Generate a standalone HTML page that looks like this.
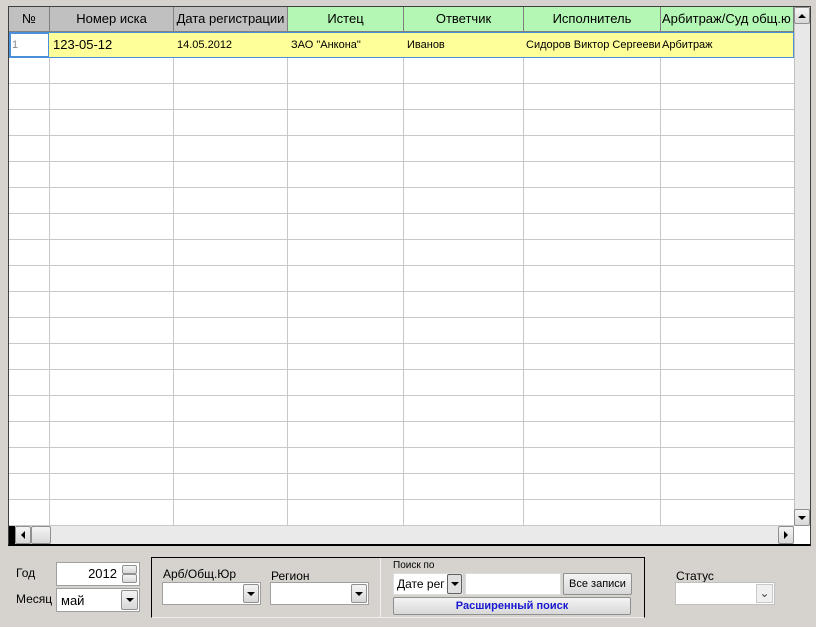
<!DOCTYPE html>
<html><head><meta charset="utf-8"><style>
*{box-sizing:border-box;margin:0;padding:0}
body{width:816px;height:627px;background:#d6d3ce;font-family:"Liberation Sans",Arial,sans-serif;position:relative;overflow:hidden}
.a{position:absolute}
.grid{left:8px;top:6px;width:803px;height:540px;background:#fff;border:1px solid #404040;border-bottom:2px solid #000}
.h{position:absolute;top:0;height:25px;border-right:1px solid #808080;border-bottom:1px solid #808080;font-size:13px;text-align:center;line-height:24px;color:#000;white-space:nowrap;overflow:hidden}
.g{background:#c0c0c0}.gr{background:#b4f7b4}
.vl{position:absolute;top:25px;width:1px;height:494px;background:#c8c8c8}
.hl{position:absolute;left:0;width:785px;height:1px;background:#c8c8c8}
.c{position:absolute;top:26px;height:24px;font-size:11px;line-height:24px;white-space:nowrap;overflow:hidden;padding-left:3px}
.inp{position:absolute;background:#fff;border:1px solid #a0a0a0;font-size:13px}
.btn{position:absolute;background:linear-gradient(#f4f4f4,#d8d8d8);border:1px solid #909090;border-radius:2px}
.tri{width:0;height:0;border-left:4px solid transparent;border-right:4px solid transparent;border-top:4px solid #000;position:absolute;left:50%;top:50%;margin:-2px 0 0 -4px}
.lbl{position:absolute;font-size:12px;color:#000}
</style></head><body>
<div class="a grid">
 <div class="h g" style="left:0;width:41px">№</div>
 <div class="h g" style="left:41px;width:124px">Номер иска</div>
 <div class="h g" style="left:165px;width:114px">Дата регистрации</div>
 <div class="h gr" style="left:279px;width:116px">Истец</div>
 <div class="h gr" style="left:395px;width:120px">Ответчик</div>
 <div class="h gr" style="left:515px;width:137px">Исполнитель</div>
 <div class="h gr" style="left:652px;width:133px;text-align:left;padding-left:1px">Арбитраж/Суд общ.ю</div>
 <div class="vl" style="left:40px"></div><div class="vl" style="left:164px"></div><div class="vl" style="left:278px"></div><div class="vl" style="left:394px"></div><div class="vl" style="left:514px"></div><div class="vl" style="left:651px"></div>
 <div class="hl" style="top:76px"></div><div class="hl" style="top:102px"></div><div class="hl" style="top:128px"></div><div class="hl" style="top:154px"></div><div class="hl" style="top:180px"></div><div class="hl" style="top:206px"></div><div class="hl" style="top:232px"></div><div class="hl" style="top:258px"></div><div class="hl" style="top:284px"></div><div class="hl" style="top:310px"></div><div class="hl" style="top:336px"></div><div class="hl" style="top:362px"></div><div class="hl" style="top:388px"></div><div class="hl" style="top:414px"></div><div class="hl" style="top:440px"></div><div class="hl" style="top:466px"></div><div class="hl" style="top:492px"></div><div class="hl" style="top:518px"></div>
 <div class="a" style="left:0;top:25px;width:785px;height:26px;background:#ffff99;border:1px solid #4a90d9"></div>
 <div class="a" style="left:1px;top:26px;width:39px;height:24px;background:#fff;border:1px solid #4a90d9;font-size:11px;color:#888;line-height:22px;padding-left:1px">1</div>
 <div class="c" style="left:41px;font-size:13px">123-05-12</div>
 <div class="c" style="left:165px">14.05.2012</div>
 <div class="c" style="left:279px">ЗАО "Анкона"</div>
 <div class="c" style="left:395px">Иванов</div>
 <div class="c" style="left:515px;width:137px;padding-left:2px">Сидоров Виктор Сергеевич</div>
 <div class="c" style="left:652px;padding-left:1px">Арбитраж</div>
 <div class="a" style="left:785px;top:0;width:16px;height:519px;background:#e8e8e8;border-left:1px solid #c0c0c0"></div>
 <div class="btn" style="left:785px;top:0;width:16px;height:17px"><div class="tri" style="transform:rotate(180deg)"></div></div>
 <div class="btn" style="left:785px;top:502px;width:16px;height:17px"><div class="tri"></div></div>
 <div class="a" style="left:0;top:519px;width:785px;height:18px;background:#eaeaea"></div>
 <div class="a" style="left:0;top:519px;width:6px;height:18px;background:#000"></div>
 <div class="btn" style="left:6px;top:519px;width:16px;height:18px"><div class="tri" style="transform:rotate(90deg)"></div></div>
 <div class="btn" style="left:22px;top:519px;width:20px;height:18px"></div>
 <div class="btn" style="left:769px;top:519px;width:16px;height:18px"><div class="tri" style="transform:rotate(-90deg)"></div></div>
</div>
<div class="lbl" style="left:16px;top:566px">Год</div>
<div class="inp" style="left:56px;top:562px;width:84px;height:24px;text-align:right;padding:3px 22px 0 0">2012</div>
<div class="btn" style="left:122px;top:565px;width:15px;height:9px"></div>
<div class="btn" style="left:122px;top:574px;width:15px;height:9px"></div>
<div class="lbl" style="left:16px;top:592px">Месяц</div>
<div class="inp" style="left:56px;top:588px;width:84px;height:24px;padding:4px 0 0 4px">май</div>
<div class="btn" style="left:121px;top:590px;width:17px;height:20px"><div class="tri"></div></div>
<div class="a" style="left:151px;top:557px;width:494px;height:61px;border-top:1px solid #000;border-left:1px solid #000;border-right:1px solid #000;border-bottom:1px solid #eee"></div>
<div class="a" style="left:380px;top:558px;width:1px;height:60px;background:#f0f0f0"></div>
<div class="lbl" style="left:163px;top:567px">Арб/Общ.Юр</div>
<div class="inp" style="left:162px;top:582px;width:99px;height:23px"></div>
<div class="btn" style="left:243px;top:584px;width:16px;height:19px"><div class="tri"></div></div>
<div class="lbl" style="left:271px;top:569px">Регион</div>
<div class="inp" style="left:270px;top:582px;width:99px;height:23px"></div>
<div class="btn" style="left:351px;top:584px;width:16px;height:19px"><div class="tri"></div></div>
<div class="lbl" style="left:393px;top:560px;font-size:10px">Поиск по</div>
<div class="inp" style="left:393px;top:573px;width:70px;height:22px;border-color:#ddd;padding:3px 0 0 3px;font-size:12px">Дате рег</div>
<div class="btn" style="left:447px;top:574px;width:15px;height:20px;background:#e0e0e0;border-color:#606060"><div class="tri"></div></div>
<div class="inp" style="left:465px;top:573px;width:96px;height:22px;border-color:#ddd"></div>
<div class="btn" style="left:563px;top:573px;width:69px;height:22px;font-size:11px;text-align:center;line-height:20px">Все записи</div>
<div class="btn" style="left:393px;top:597px;width:238px;height:18px;font-size:11px;font-weight:bold;color:#1818d0;text-align:center;line-height:16px">Расширенный поиск</div>
<div class="lbl" style="left:676px;top:569px">Статус</div>
<div class="inp" style="left:675px;top:582px;width:100px;height:23px;border-color:#c0c0c0"></div>
<div class="a" style="left:756px;top:584px;width:17px;height:19px;background:#f0f0f0;border:1px solid #c8c8c8;font-size:12px;color:#444;text-align:center;line-height:16px">&#8964;</div>
</body></html>
